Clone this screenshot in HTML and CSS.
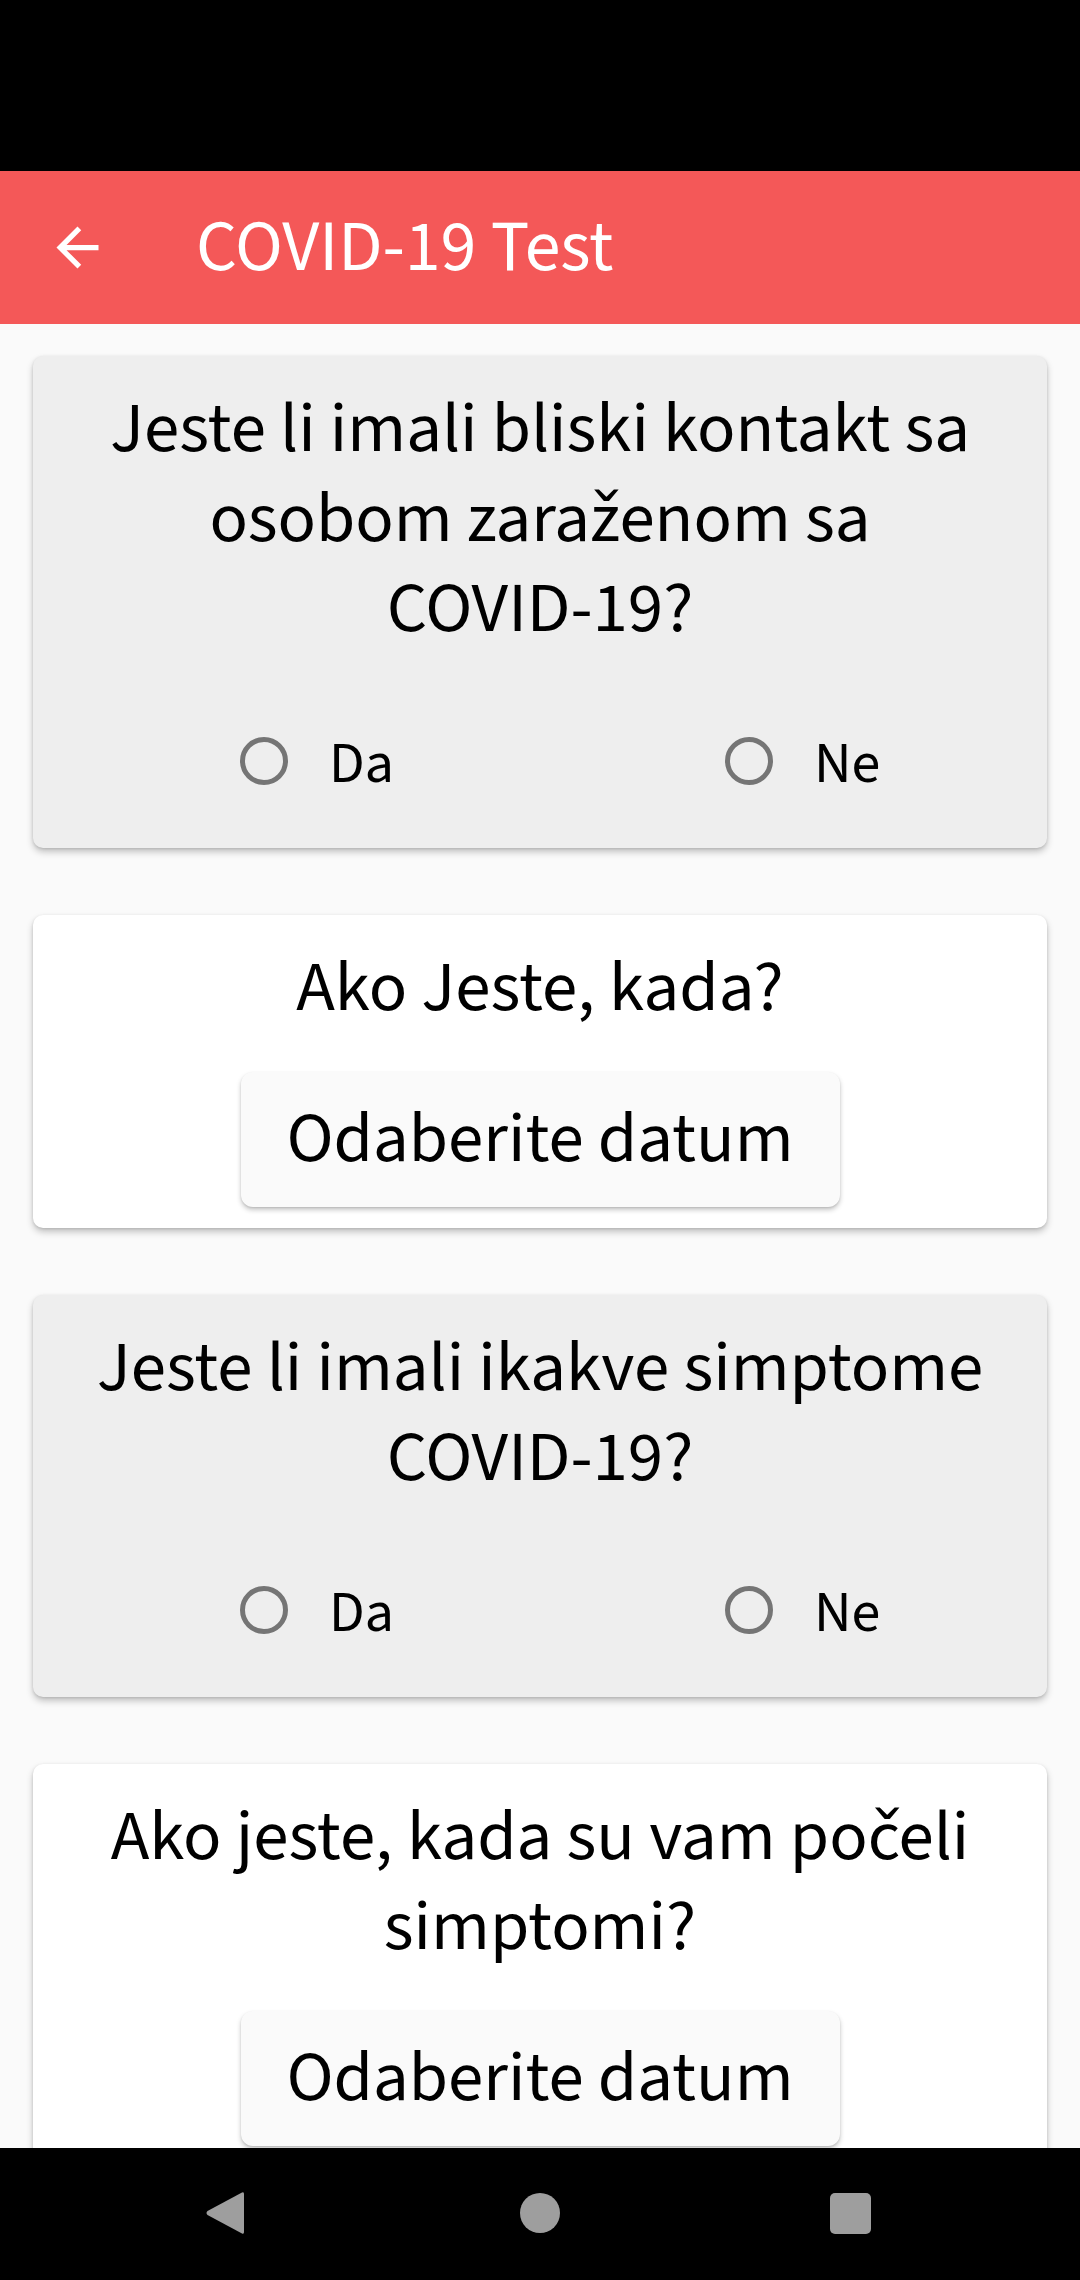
FILE: index.html
```html
<!DOCTYPE html>
<html lang="hr">
<head>
<meta charset="utf-8">
<title>COVID-19 Test</title>
<link rel="stylesheet" href="styles.css">
</head>
<body>
<div class="screen">
  <div class="status-bar"></div>
  <header class="app-bar">
    <svg class="back" viewBox="0 0 24 24" width="63" height="63" aria-hidden="true">
      <path fill="#ffffff" d="M20 11H7.83l5.59-5.59L12 4l-8 8 8 8 1.41-1.41L7.83 13H20v-2z"/>
    </svg>
    <h1 class="title">COVID-19 Test</h1>
  </header>
  <main class="content">
    <section class="card card-grey">
      <p class="question">Jeste li imali bliski kontakt sa osobom zaraženom sa <span class="nowrap">COVID-19?</span></p>
      <div class="radio-row">
        <label class="option"><span class="radio"></span><span class="label">Da</span></label>
        <label class="option"><span class="radio"></span><span class="label">Ne</span></label>
      </div>
    </section>
    <section class="card card-white">
      <p class="question">Ako Jeste, kada?</p>
      <button class="date-btn">Odaberite datum</button>
    </section>
    <section class="card card-grey">
      <p class="question">Jeste li imali ikakve simptome <span class="nowrap">COVID-19?</span></p>
      <div class="radio-row">
        <label class="option"><span class="radio"></span><span class="label">Da</span></label>
        <label class="option"><span class="radio"></span><span class="label">Ne</span></label>
      </div>
    </section>
    <section class="card card-white">
      <p class="question">Ako jeste, kada su vam počeli simptomi?</p>
      <button class="date-btn">Odaberite datum</button>
    </section>
  </main>
  <nav class="nav-bar">
    <svg class="nav-icon" viewBox="0 0 40 46" width="40" height="46" aria-hidden="true">
      <path fill="#9e9e9e" d="M37 2.5 Q39 1.5 39 4 L39 42 Q39 44.5 37 43.5 L2.5 25 Q0.5 23 2.5 21 Z"/>
    </svg>
    <span class="nav-home"></span>
    <span class="nav-recent"></span>
  </nav>
</div>
</body>
</html>
```
FILE: styles.css
```css
* { box-sizing: border-box; }

html, body {
  margin: 0;
  padding: 0;
  background: #000;
}

body {
  font-family: "Source Sans 3", "Lato", sans-serif;
  color: #000;
}

.screen {
  width: 1080px;
  height: 2280px;
  display: flex;
  flex-direction: column;
  overflow: hidden;
  background: #fafafa;
}

.status-bar {
  height: 171px;
  flex: none;
  background: #000;
}

.app-bar {
  height: 153px;
  flex: none;
  background: #f45858;
  display: flex;
  align-items: center;
  padding-left: 46px;
}

.back {
  display: block;
  flex: none;
}

.title {
  margin: 0 0 0 87px;
  font-size: 72px;
  line-height: 72px;
  font-weight: 400;
  color: #fff;
}

.content {
  flex: 1;
  min-height: 0;
  overflow: hidden;
  display: flex;
  flex-direction: column;
  gap: 67px;
  padding: 32px 33px 0;
}

.card {
  flex: none;
  border-radius: 10px;
  padding: 28px 24px 0;
  box-shadow: 0 4px 7px rgba(0, 0, 0, 0.22), 0 1px 3px rgba(0, 0, 0, 0.12);
  display: flex;
  flex-direction: column;
  align-items: center;
}

.card-grey {
  background: #eeeeee;
  padding-bottom: 24px;
}

.card-white {
  background: #ffffff;
  padding-bottom: 21px;
}

.question {
  margin: 0;
  font-size: 71px;
  line-height: 90px;
  text-align: center;
  align-self: stretch;
}

.nowrap {
  white-space: nowrap;
}

.radio-row {
  align-self: stretch;
  margin: 44px -24px 0;
  height: 126px;
  padding-left: 207px;
  display: grid;
  grid-template-columns: 485px auto;
  align-items: center;
}

.option {
  display: flex;
  align-items: center;
  gap: 41px;
}

.radio {
  width: 48px;
  height: 48px;
  border-radius: 50%;
  border: 5px solid #757575;
  flex: none;
}

.label {
  font-size: 58px;
  line-height: 58px;
  padding-top: 5px;
}

.date-btn {
  margin-top: 39px;
  width: 599px;
  height: 135px;
  border: none;
  border-radius: 12px;
  background: #fafafa;
  box-shadow: 0 3px 5px rgba(0, 0, 0, 0.22), 0 1px 2px rgba(0, 0, 0, 0.1);
  font-family: "Source Sans 3", "Lato", sans-serif;
  font-size: 71px;
  line-height: 71px;
  color: #000;
  padding: 0 0 2px;
}

.nav-bar {
  height: 132px;
  flex: none;
  background: #000;
  display: flex;
  align-items: center;
  padding-left: 205px;
}

.nav-icon {
  display: block;
  flex: none;
  margin-top: -2px;
}

.nav-home {
  width: 40px;
  height: 40px;
  border-radius: 50%;
  background: #9e9e9e;
  margin-left: 275px;
  margin-top: -2px;
}

.nav-recent {
  width: 41px;
  height: 41px;
  border-radius: 5px;
  background: #9e9e9e;
  margin-left: 270px;
  margin-top: -2px;
}
```
